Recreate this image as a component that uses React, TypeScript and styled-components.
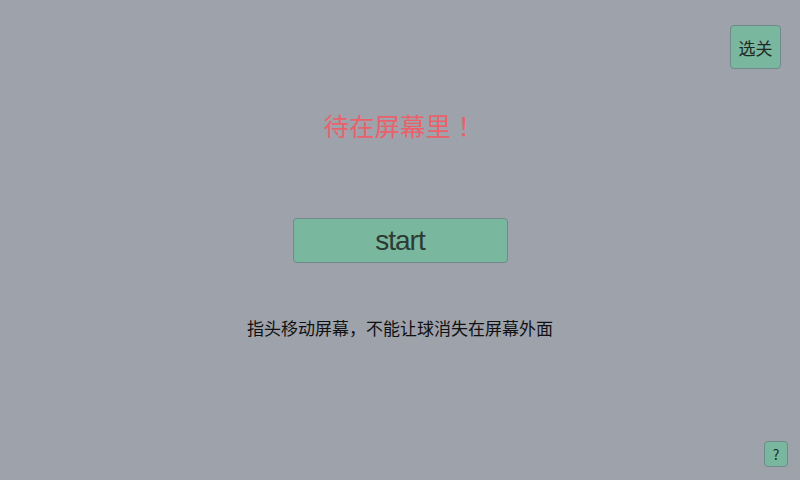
import React from "react";
import styled, { createGlobalStyle } from "styled-components";

const Global = createGlobalStyle`
  html, body { margin: 0; padding: 0; }
  body { background: #9ea2ab; font-family: "Noto Sans CJK SC", "Noto Sans", sans-serif; }
`;

const Screen = styled.div`
  width: 800px;
  height: 480px;
  display: flex;
  flex-direction: column;
  background: #9ea2ab;
  box-sizing: border-box;
  padding: 25px 19px 13px 0;
`;

const TopBar = styled.div`
  display: flex;
  justify-content: flex-end;
`;

const GreenButton = styled.button<{ $w: number; $h: number; $fs: number }>`
  width: ${(p) => p.$w}px;
  height: ${(p) => p.$h}px;
  background: #7ab79f;
  border: 1.5px solid #70898a;
  border-radius: 4px;
  color: #1f2a26;
  font-size: ${(p) => p.$fs}px;
  font-family: "Noto Sans CJK SC", "Liberation Sans", sans-serif;
  padding: 0;
  display: flex;
  align-items: center;
  justify-content: center;
  box-sizing: border-box;
`;

const Center = styled.div`
  flex: 1;
  display: flex;
  flex-direction: column;
  align-items: center;
  padding-left: 19px;
`;

const Title = styled.div`
  margin-top: 38px;
  color: #e9626b;
  font-size: 25.5px;
  line-height: 36px;
  letter-spacing: 0;
`;

const Bang = styled.span`
  font-family: "Noto Sans CJK TC", sans-serif;
`;

const StartButton = styled(GreenButton)`
  margin-top: 75px;
  font-family: "Liberation Sans", sans-serif;
  letter-spacing: -1px;
  color: #2c3b35;
`;

const Hint = styled.div`
  margin-top: 52px;
  color: #111;
  font-size: 17px;
  line-height: 26px;
  letter-spacing: 0;
`;

const BottomBar = styled.div`
  display: flex;
  justify-content: flex-end;
  margin-right: -7px;
`;

export default function App() {
  return (
    <>
      <Global />
      <Screen>
        <TopBar>
          <GreenButton $w={51} $h={44} $fs={17}>选关</GreenButton>
        </TopBar>
        <Center>
          <Title>
            待在屏幕里<Bang>！</Bang>
          </Title>
          <StartButton $w={215} $h={45} $fs={28}>start</StartButton>
          <Hint>指头移动屏幕，不能让球消失在屏幕外面</Hint>
        </Center>
        <BottomBar>
          <GreenButton $w={24} $h={26} $fs={14}>?</GreenButton>
        </BottomBar>
      </Screen>
    </>
  );
}
